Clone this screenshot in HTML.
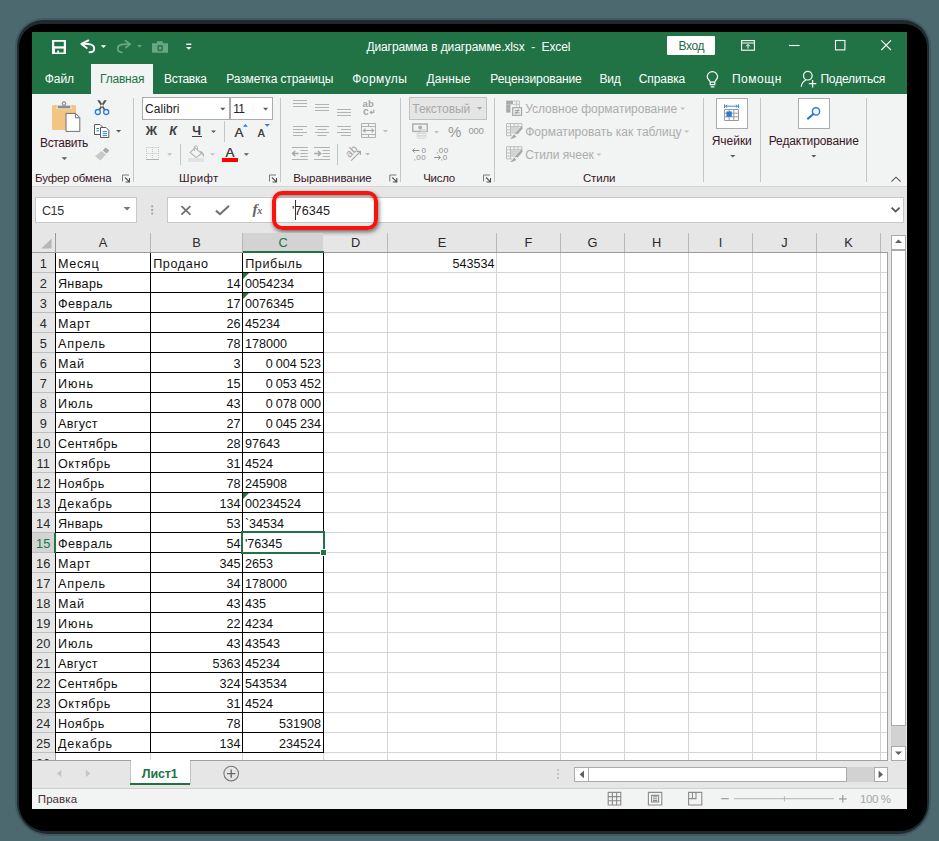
<!DOCTYPE html>
<html><head><meta charset="utf-8"><title>Excel</title>
<style>
*{box-sizing:border-box;margin:0;padding:0}
html,body{width:939px;height:841px;overflow:hidden}
body{background:#4c6970;font-family:"Liberation Sans",sans-serif;position:relative}
.a{position:absolute}
.t{position:absolute;white-space:nowrap}
svg.ov{position:absolute;left:0;top:0;width:939px;height:841px;overflow:visible}
</style></head><body>
<div class="a" style="left:17px;top:20px;width:912px;height:814px;background:rgba(0,0,0,.6);border-radius:26px 26px 31px 31px;box-shadow:0 0 0 2px rgba(0,0,0,.14)"></div>
<div class="a" style="left:19px;top:24px;width:908px;height:807px;background:#000;border-radius:23px 23px 27px 27px"></div>
<div class="a" style="left:32px;top:32px;width:875px;height:777px;background:#f2f3f3;"></div>
<div class="a" style="left:32px;top:32px;width:875px;height:62px;background:#217346;"></div>
<div class="t" style="left:366.40px;top:39px;font-size:12px;line-height:16px;color:#fff;letter-spacing:-0.094px;">Диаграмма в диаграмме.xlsx  -  Excel</div>
<div class="a" style="left:667px;top:36px;width:48px;height:19px;background:#fff;border-radius:1px"></div>
<div class="t" style="left:678.40px;top:38px;font-size:12px;line-height:16px;color:#1e6a3f;letter-spacing:-0.362px;">Вход</div>
<div class="a" style="left:91px;top:64px;width:62px;height:30px;background:#f2f3f3;"></div>
<div class="t" style="left:44.80px;top:71px;font-size:12px;line-height:16px;color:#fff;letter-spacing:-0.101px;">Файл</div>
<div class="t" style="left:100.10px;top:71px;font-size:12px;line-height:16px;color:#217346;letter-spacing:-0.225px;">Главная</div>
<div class="t" style="left:164.00px;top:71px;font-size:12px;line-height:16px;color:#fff;letter-spacing:-0.300px;">Вставка</div>
<div class="t" style="left:226.30px;top:71px;font-size:12px;line-height:16px;color:#fff;letter-spacing:-0.115px;">Разметка страницы</div>
<div class="t" style="left:352.30px;top:71px;font-size:12px;line-height:16px;color:#fff;letter-spacing:0.397px;">Формулы</div>
<div class="t" style="left:426.40px;top:71px;font-size:12px;line-height:16px;color:#fff;letter-spacing:0.141px;">Данные</div>
<div class="t" style="left:490.30px;top:71px;font-size:12px;line-height:16px;color:#fff;letter-spacing:-0.090px;">Рецензирование</div>
<div class="t" style="left:599.60px;top:71px;font-size:12px;line-height:16px;color:#fff;letter-spacing:-0.303px;">Вид</div>
<div class="t" style="left:638.80px;top:71px;font-size:12px;line-height:16px;color:#fff;letter-spacing:-0.096px;">Справка</div>
<div class="t" style="left:731.90px;top:71px;font-size:12px;line-height:16px;color:#fff;letter-spacing:0.546px;">Помощн</div>
<div class="t" style="left:820.40px;top:71px;font-size:12px;line-height:16px;color:#fff;letter-spacing:-0.147px;">Поделиться</div>
<div class="a" style="left:32px;top:186px;width:875px;height:1px;background:#d4d4d4;"></div>
<div class="a" style="left:133px;top:98px;width:1px;height:84px;background:#c6c6c6;"></div>
<div class="a" style="left:280px;top:98px;width:1px;height:84px;background:#c6c6c6;"></div>
<div class="a" style="left:400px;top:98px;width:1px;height:84px;background:#c6c6c6;"></div>
<div class="a" style="left:494px;top:98px;width:1px;height:84px;background:#c6c6c6;"></div>
<div class="a" style="left:703px;top:98px;width:1px;height:84px;background:#c6c6c6;"></div>
<div class="a" style="left:760px;top:98px;width:1px;height:84px;background:#c6c6c6;"></div>
<div class="a" style="left:866px;top:98px;width:1px;height:84px;background:#c6c6c6;"></div>
<div class="t" style="left:40.10px;top:135px;font-size:12px;line-height:16px;color:#3a1626;letter-spacing:-0.371px;">Вставить</div>
<div class="t" style="left:35.00px;top:170px;font-size:11.5px;line-height:16px;color:#3a1626;letter-spacing:-0.129px;">Буфер обмена</div>
<div class="a" style="left:142px;top:97px;width:88px;height:23px;background:#fff;border:1px solid #ababab"></div>
<div class="a" style="left:230px;top:97px;width:43px;height:23px;background:#fff;border:1px solid #ababab"></div>
<div class="t" style="left:145.00px;top:101px;font-size:12px;line-height:16px;color:#222;letter-spacing:0.070px;">Calibri</div>
<div class="t" style="left:233.30px;top:101px;font-size:12px;line-height:16px;color:#222;letter-spacing:-0.779px;">11</div>
<div class="t" style="left:145.70px;top:123px;font-size:12.5px;line-height:16px;color:#403c44;letter-spacing:2.602px;font-weight:bold;">Ж</div>
<div class="t" style="left:169.20px;top:123px;font-size:12.5px;line-height:16px;color:#403c44;letter-spacing:2.315px;font-weight:bold;font-style:italic;">К</div>
<div class="t" style="left:192.20px;top:123px;font-size:12.5px;line-height:16px;color:#403c44;letter-spacing:-0.283px;font-weight:bold;">Ч</div>
<div class="a" style="left:192px;top:136px;width:10px;height:1px;background:#403c44;"></div>
<div class="a" style="left:224px;top:121px;width:1px;height:21px;background:#c6c6c6;"></div>
<div class="t" style="left:234.60px;top:125px;font-size:13.5px;line-height:16px;color:#444;letter-spacing:1.395px;text-shadow:0 0 0.6px #444;">A</div>
<div class="t" style="left:257.80px;top:125px;font-size:10.5px;line-height:16px;color:#444;letter-spacing:0.996px;text-shadow:0 0 0.6px #444;">A</div>
<div class="a" style="left:180px;top:144px;width:1px;height:21px;background:#c6c6c6;"></div>
<div class="a" style="left:188px;top:158px;width:16px;height:4px;background:#e2e2e2;"></div>
<div class="t" style="left:225.60px;top:145px;font-size:13.5px;line-height:16px;color:#444;letter-spacing:0.995px;text-shadow:0 0 0.6px #444;">A</div>
<div class="a" style="left:222px;top:158px;width:16px;height:4px;background:#f00;"></div>
<div class="t" style="left:179.00px;top:170px;font-size:11.5px;line-height:16px;color:#3a1626;letter-spacing:0.373px;">Шрифт</div>
<div class="t" style="left:362.60px;top:96px;font-size:9.5px;line-height:16px;color:#a6a6a6;letter-spacing:0.1px;font-weight:bold;">ab</div>
<div class="t" style="left:363.00px;top:104px;font-size:10px;line-height:16px;color:#a6a6a6;letter-spacing:0px;font-weight:bold;">c</div>
<div class="a" style="left:337px;top:144px;width:1px;height:21px;background:#c6c6c6;"></div>
<div class="t" style="left:344.6px;top:144.2px;font-size:11px;line-height:14px;color:#a2a2a2;transform:rotate(-45deg);transform-origin:50% 50%">ab</div>
<div class="t" style="left:293.20px;top:170px;font-size:11.5px;line-height:16px;color:#3a1626;letter-spacing:-0.055px;">Выравнивание</div>
<div class="a" style="left:409px;top:97px;width:78px;height:23px;background:#e5e5e5;border:1px solid #c0c0c0"></div>
<div class="t" style="left:412.30px;top:101px;font-size:12px;line-height:16px;color:#a9a9a9;letter-spacing:-0.062px;">Текстовый</div>
<div class="t" style="left:447.90px;top:124px;font-size:15px;line-height:16px;color:#979797;letter-spacing:-0.037px;">%</div>
<div class="t" style="left:468.40px;top:123px;font-size:9.5px;line-height:16px;color:#979797;letter-spacing:-0.217px;">000</div>
<div class="t" style="left:421.40px;top:143px;font-size:8px;line-height:16px;color:#8e8e8e;letter-spacing:0px;">0</div>
<div class="t" style="left:413.60px;top:150px;font-size:8px;line-height:16px;color:#8e8e8e;letter-spacing:0.5px;">,00</div>
<div class="t" style="left:436.20px;top:143px;font-size:8px;line-height:16px;color:#8e8e8e;letter-spacing:0.4px;">,00</div>
<div class="t" style="left:440.60px;top:150px;font-size:8px;line-height:16px;color:#8e8e8e;letter-spacing:0px;">,0</div>
<div class="t" style="left:423.20px;top:170px;font-size:11.5px;line-height:16px;color:#3a1626;letter-spacing:-0.295px;">Число</div>
<div class="t" style="left:525.20px;top:101px;font-size:12px;line-height:16px;color:#adadad;letter-spacing:-0.029px;">Условное форматирование</div>
<div class="t" style="left:525.20px;top:124px;font-size:12px;line-height:16px;color:#adadad;letter-spacing:0.011px;">Форматировать как таблицу</div>
<div class="t" style="left:525.20px;top:147px;font-size:12px;line-height:16px;color:#adadad;letter-spacing:-0.068px;">Стили ячеек</div>
<div class="t" style="left:582.90px;top:170px;font-size:11.5px;line-height:16px;color:#3a1626;letter-spacing:-0.166px;">Стили</div>
<div class="a" style="left:716px;top:98px;width:32px;height:31px;background:#fff;border:1px solid #ababab"></div>
<div class="t" style="left:711.70px;top:133px;font-size:12px;line-height:16px;color:#3a1626;letter-spacing:-0.025px;">Ячейки</div>
<div class="a" style="left:798px;top:98px;width:32px;height:31px;background:#fff;border:1px solid #ababab"></div>
<div class="t" style="left:768.70px;top:133px;font-size:12px;line-height:16px;color:#3a1626;letter-spacing:-0.094px;">Редактирование</div>
<div class="a" style="left:32px;top:187px;width:875px;height:573px;background:#e6e6e6;"></div>
<div class="a" style="left:35px;top:197px;width:102px;height:26px;background:#fff;border:1px solid #c8c8c8"></div>
<div class="t" style="left:41.90px;top:203px;font-size:12.5px;line-height:16px;color:#333;letter-spacing:-0.344px;">C15</div>
<div class="a" style="left:167px;top:197px;width:737px;height:26px;background:#fff;border:1px solid #c8c8c8"></div>
<div class="t" style="left:252.4px;top:201px;font-family:'Liberation Serif',serif;font-style:italic;font-size:15.5px;line-height:16px;color:#666;font-weight:bold;letter-spacing:-0.3px">f<span style="font-size:10px">x</span></div>
<div class="t" style="left:292.10px;top:203px;font-size:12.6px;line-height:16px;color:#222;letter-spacing:0.109px;">'76345</div>
<div class="a" style="left:295px;top:200px;width:1px;height:20px;background:#333;"></div>
<div class="a" style="left:272px;top:190.5px;width:106px;height:39px;border:4px solid #f8130c;border-radius:10px;box-shadow:1px 2px 4px rgba(0,0,0,.55),inset 0 2px 2px rgba(0,0,0,.3)"></div>
<div class="a" style="left:56px;top:253px;width:831px;height:507px;background:#fff;"></div>
<div class="a" style="left:243px;top:233px;width:80px;height:18px;background:#d3d3d3;"></div>
<div class="a" style="left:150px;top:233px;width:1px;height:19px;background:#b7b7b7;"></div>
<div class="a" style="left:387px;top:233px;width:1px;height:19px;background:#b7b7b7;"></div>
<div class="a" style="left:496px;top:233px;width:1px;height:19px;background:#b7b7b7;"></div>
<div class="a" style="left:560px;top:233px;width:1px;height:19px;background:#b7b7b7;"></div>
<div class="a" style="left:624px;top:233px;width:1px;height:19px;background:#b7b7b7;"></div>
<div class="a" style="left:688px;top:233px;width:1px;height:19px;background:#b7b7b7;"></div>
<div class="a" style="left:752px;top:233px;width:1px;height:19px;background:#b7b7b7;"></div>
<div class="a" style="left:816px;top:233px;width:1px;height:19px;background:#b7b7b7;"></div>
<div class="a" style="left:880px;top:233px;width:1px;height:19px;background:#b7b7b7;"></div>
<div class="a" style="left:242px;top:233px;width:1px;height:19px;background:#b7b7b7;"></div>
<div class="a" style="left:32px;top:252px;width:855px;height:1px;background:#9b9b9b;"></div>
<div class="a" style="left:55px;top:233px;width:1px;height:527px;background:#9b9b9b;"></div>
<div class="a" style="left:243px;top:251px;width:81px;height:2px;background:#217346;"></div>
<div class="t" style="left:98.73px;top:235px;font-size:12.8px;line-height:16px;color:#2a2a2a;letter-spacing:0px;">A</div>
<div class="t" style="left:192.23px;top:235px;font-size:12.8px;line-height:16px;color:#2a2a2a;letter-spacing:0px;">B</div>
<div class="t" style="left:278.38px;top:235px;font-size:12.8px;line-height:16px;color:#217346;letter-spacing:0px;">C</div>
<div class="t" style="left:350.88px;top:235px;font-size:12.8px;line-height:16px;color:#2a2a2a;letter-spacing:0px;">D</div>
<div class="t" style="left:437.73px;top:235px;font-size:12.8px;line-height:16px;color:#2a2a2a;letter-spacing:0px;">E</div>
<div class="t" style="left:524.59px;top:235px;font-size:12.8px;line-height:16px;color:#2a2a2a;letter-spacing:0px;">F</div>
<div class="t" style="left:587.52px;top:235px;font-size:12.8px;line-height:16px;color:#2a2a2a;letter-spacing:0px;">G</div>
<div class="t" style="left:651.88px;top:235px;font-size:12.8px;line-height:16px;color:#2a2a2a;letter-spacing:0px;">H</div>
<div class="t" style="left:718.72px;top:235px;font-size:12.8px;line-height:16px;color:#2a2a2a;letter-spacing:0px;">I</div>
<div class="t" style="left:781.30px;top:235px;font-size:12.8px;line-height:16px;color:#2a2a2a;letter-spacing:0px;">J</div>
<div class="t" style="left:844.23px;top:235px;font-size:12.8px;line-height:16px;color:#2a2a2a;letter-spacing:0px;">K</div>
<div class="a" style="left:387px;top:253px;width:1px;height:507px;background:#d4d4d4;"></div>
<div class="a" style="left:496px;top:253px;width:1px;height:507px;background:#d4d4d4;"></div>
<div class="a" style="left:560px;top:253px;width:1px;height:507px;background:#d4d4d4;"></div>
<div class="a" style="left:624px;top:253px;width:1px;height:507px;background:#d4d4d4;"></div>
<div class="a" style="left:688px;top:253px;width:1px;height:507px;background:#d4d4d4;"></div>
<div class="a" style="left:752px;top:253px;width:1px;height:507px;background:#d4d4d4;"></div>
<div class="a" style="left:816px;top:253px;width:1px;height:507px;background:#d4d4d4;"></div>
<div class="a" style="left:880px;top:253px;width:1px;height:507px;background:#d4d4d4;"></div>
<div class="a" style="left:324px;top:272px;width:563px;height:1px;background:#d4d4d4;"></div>
<div class="a" style="left:32px;top:272px;width:23px;height:1px;background:#bdbdbd;"></div>
<div class="a" style="left:324px;top:292px;width:563px;height:1px;background:#d4d4d4;"></div>
<div class="a" style="left:32px;top:292px;width:23px;height:1px;background:#bdbdbd;"></div>
<div class="a" style="left:324px;top:312px;width:563px;height:1px;background:#d4d4d4;"></div>
<div class="a" style="left:32px;top:312px;width:23px;height:1px;background:#bdbdbd;"></div>
<div class="a" style="left:324px;top:332px;width:563px;height:1px;background:#d4d4d4;"></div>
<div class="a" style="left:32px;top:332px;width:23px;height:1px;background:#bdbdbd;"></div>
<div class="a" style="left:324px;top:352px;width:563px;height:1px;background:#d4d4d4;"></div>
<div class="a" style="left:32px;top:352px;width:23px;height:1px;background:#bdbdbd;"></div>
<div class="a" style="left:324px;top:372px;width:563px;height:1px;background:#d4d4d4;"></div>
<div class="a" style="left:32px;top:372px;width:23px;height:1px;background:#bdbdbd;"></div>
<div class="a" style="left:324px;top:392px;width:563px;height:1px;background:#d4d4d4;"></div>
<div class="a" style="left:32px;top:392px;width:23px;height:1px;background:#bdbdbd;"></div>
<div class="a" style="left:324px;top:412px;width:563px;height:1px;background:#d4d4d4;"></div>
<div class="a" style="left:32px;top:412px;width:23px;height:1px;background:#bdbdbd;"></div>
<div class="a" style="left:324px;top:432px;width:563px;height:1px;background:#d4d4d4;"></div>
<div class="a" style="left:32px;top:432px;width:23px;height:1px;background:#bdbdbd;"></div>
<div class="a" style="left:324px;top:452px;width:563px;height:1px;background:#d4d4d4;"></div>
<div class="a" style="left:32px;top:452px;width:23px;height:1px;background:#bdbdbd;"></div>
<div class="a" style="left:324px;top:472px;width:563px;height:1px;background:#d4d4d4;"></div>
<div class="a" style="left:32px;top:472px;width:23px;height:1px;background:#bdbdbd;"></div>
<div class="a" style="left:324px;top:492px;width:563px;height:1px;background:#d4d4d4;"></div>
<div class="a" style="left:32px;top:492px;width:23px;height:1px;background:#bdbdbd;"></div>
<div class="a" style="left:324px;top:512px;width:563px;height:1px;background:#d4d4d4;"></div>
<div class="a" style="left:32px;top:512px;width:23px;height:1px;background:#bdbdbd;"></div>
<div class="a" style="left:324px;top:532px;width:563px;height:1px;background:#d4d4d4;"></div>
<div class="a" style="left:32px;top:532px;width:23px;height:1px;background:#bdbdbd;"></div>
<div class="a" style="left:324px;top:552px;width:563px;height:1px;background:#d4d4d4;"></div>
<div class="a" style="left:32px;top:552px;width:23px;height:1px;background:#bdbdbd;"></div>
<div class="a" style="left:324px;top:572px;width:563px;height:1px;background:#d4d4d4;"></div>
<div class="a" style="left:32px;top:572px;width:23px;height:1px;background:#bdbdbd;"></div>
<div class="a" style="left:324px;top:592px;width:563px;height:1px;background:#d4d4d4;"></div>
<div class="a" style="left:32px;top:592px;width:23px;height:1px;background:#bdbdbd;"></div>
<div class="a" style="left:324px;top:612px;width:563px;height:1px;background:#d4d4d4;"></div>
<div class="a" style="left:32px;top:612px;width:23px;height:1px;background:#bdbdbd;"></div>
<div class="a" style="left:324px;top:632px;width:563px;height:1px;background:#d4d4d4;"></div>
<div class="a" style="left:32px;top:632px;width:23px;height:1px;background:#bdbdbd;"></div>
<div class="a" style="left:324px;top:652px;width:563px;height:1px;background:#d4d4d4;"></div>
<div class="a" style="left:32px;top:652px;width:23px;height:1px;background:#bdbdbd;"></div>
<div class="a" style="left:324px;top:672px;width:563px;height:1px;background:#d4d4d4;"></div>
<div class="a" style="left:32px;top:672px;width:23px;height:1px;background:#bdbdbd;"></div>
<div class="a" style="left:324px;top:692px;width:563px;height:1px;background:#d4d4d4;"></div>
<div class="a" style="left:32px;top:692px;width:23px;height:1px;background:#bdbdbd;"></div>
<div class="a" style="left:324px;top:712px;width:563px;height:1px;background:#d4d4d4;"></div>
<div class="a" style="left:32px;top:712px;width:23px;height:1px;background:#bdbdbd;"></div>
<div class="a" style="left:324px;top:732px;width:563px;height:1px;background:#d4d4d4;"></div>
<div class="a" style="left:32px;top:732px;width:23px;height:1px;background:#bdbdbd;"></div>
<div class="a" style="left:324px;top:752px;width:563px;height:1px;background:#d4d4d4;"></div>
<div class="a" style="left:32px;top:752px;width:23px;height:1px;background:#bdbdbd;"></div>
<div class="a" style="left:150px;top:753px;width:1px;height:7px;background:#d4d4d4;"></div>
<div class="a" style="left:242px;top:753px;width:1px;height:7px;background:#d4d4d4;"></div>
<div class="a" style="left:323px;top:753px;width:1px;height:7px;background:#d4d4d4;"></div>
<div class="a" style="left:887px;top:252px;width:1px;height:509px;background:#a0a0a0;"></div>
<div class="a" style="left:32px;top:760px;width:856px;height:1px;background:#a0a0a0;"></div>
<div class="a" style="left:32px;top:533px;width:23px;height:19px;background:#d3d3d3;"></div>
<div class="t" style="left:39.64px;top:256px;font-size:12.8px;line-height:16px;color:#2a2a2a;letter-spacing:0px;">1</div>
<div class="t" style="left:39.64px;top:276px;font-size:12.8px;line-height:16px;color:#2a2a2a;letter-spacing:0px;">2</div>
<div class="t" style="left:39.64px;top:296px;font-size:12.8px;line-height:16px;color:#2a2a2a;letter-spacing:0px;">3</div>
<div class="t" style="left:39.64px;top:316px;font-size:12.8px;line-height:16px;color:#2a2a2a;letter-spacing:0px;">4</div>
<div class="t" style="left:39.64px;top:336px;font-size:12.8px;line-height:16px;color:#2a2a2a;letter-spacing:0px;">5</div>
<div class="t" style="left:39.64px;top:356px;font-size:12.8px;line-height:16px;color:#2a2a2a;letter-spacing:0px;">6</div>
<div class="t" style="left:39.64px;top:376px;font-size:12.8px;line-height:16px;color:#2a2a2a;letter-spacing:0px;">7</div>
<div class="t" style="left:39.64px;top:396px;font-size:12.8px;line-height:16px;color:#2a2a2a;letter-spacing:0px;">8</div>
<div class="t" style="left:39.64px;top:416px;font-size:12.8px;line-height:16px;color:#2a2a2a;letter-spacing:0px;">9</div>
<div class="t" style="left:36.08px;top:436px;font-size:12.8px;line-height:16px;color:#2a2a2a;letter-spacing:0px;">10</div>
<div class="t" style="left:36.56px;top:456px;font-size:12.8px;line-height:16px;color:#2a2a2a;letter-spacing:0px;">11</div>
<div class="t" style="left:36.08px;top:476px;font-size:12.8px;line-height:16px;color:#2a2a2a;letter-spacing:0px;">12</div>
<div class="t" style="left:36.08px;top:496px;font-size:12.8px;line-height:16px;color:#2a2a2a;letter-spacing:0px;">13</div>
<div class="t" style="left:36.08px;top:516px;font-size:12.8px;line-height:16px;color:#2a2a2a;letter-spacing:0px;">14</div>
<div class="t" style="left:36.08px;top:536px;font-size:12.8px;line-height:16px;color:#217346;letter-spacing:0px;">15</div>
<div class="t" style="left:36.08px;top:556px;font-size:12.8px;line-height:16px;color:#2a2a2a;letter-spacing:0px;">16</div>
<div class="t" style="left:36.08px;top:576px;font-size:12.8px;line-height:16px;color:#2a2a2a;letter-spacing:0px;">17</div>
<div class="t" style="left:36.08px;top:596px;font-size:12.8px;line-height:16px;color:#2a2a2a;letter-spacing:0px;">18</div>
<div class="t" style="left:36.08px;top:616px;font-size:12.8px;line-height:16px;color:#2a2a2a;letter-spacing:0px;">19</div>
<div class="t" style="left:36.08px;top:636px;font-size:12.8px;line-height:16px;color:#2a2a2a;letter-spacing:0px;">20</div>
<div class="t" style="left:36.08px;top:656px;font-size:12.8px;line-height:16px;color:#2a2a2a;letter-spacing:0px;">21</div>
<div class="t" style="left:36.08px;top:676px;font-size:12.8px;line-height:16px;color:#2a2a2a;letter-spacing:0px;">22</div>
<div class="t" style="left:36.08px;top:696px;font-size:12.8px;line-height:16px;color:#2a2a2a;letter-spacing:0px;">23</div>
<div class="t" style="left:36.08px;top:716px;font-size:12.8px;line-height:16px;color:#2a2a2a;letter-spacing:0px;">24</div>
<div class="t" style="left:36.08px;top:736px;font-size:12.8px;line-height:16px;color:#2a2a2a;letter-spacing:0px;">25</div>
<div class="a" style="left:32px;top:753px;width:23px;height:7px;overflow:hidden"><div class="t" style="left:4px;top:3px;font-size:12.6px;line-height:16px;color:#2a2a2a">26</div></div>
<div class="t" style="left:57.90px;top:256px;font-size:12.6px;line-height:16px;color:#111;letter-spacing:0.683px;">Месяц</div>
<div class="t" style="left:153.15px;top:256px;font-size:12.6px;line-height:16px;color:#111;letter-spacing:0.647px;">Продано</div>
<div class="t" style="left:245.20px;top:256px;font-size:12.6px;line-height:16px;color:#111;letter-spacing:0.601px;">Прибыль</div>
<div class="t" style="left:57.90px;top:276px;font-size:12.6px;line-height:16px;color:#111;letter-spacing:0.368px;">Январь</div>
<div class="t" style="right:698.60px;top:276px;font-size:12.6px;line-height:16px;color:#111;letter-spacing:0px;text-align:right;">14</div>
<div class="t" style="left:244.90px;top:276px;font-size:12.6px;line-height:16px;color:#111;letter-spacing:0px;">0054234</div>
<div class="t" style="left:57.90px;top:296px;font-size:12.6px;line-height:16px;color:#111;letter-spacing:0.555px;">Февраль</div>
<div class="t" style="right:698.60px;top:296px;font-size:12.6px;line-height:16px;color:#111;letter-spacing:0px;text-align:right;">17</div>
<div class="t" style="left:244.90px;top:296px;font-size:12.6px;line-height:16px;color:#111;letter-spacing:0px;">0076345</div>
<div class="t" style="left:57.90px;top:316px;font-size:12.6px;line-height:16px;color:#111;letter-spacing:0.738px;">Март</div>
<div class="t" style="right:698.60px;top:316px;font-size:12.6px;line-height:16px;color:#111;letter-spacing:0px;text-align:right;">26</div>
<div class="t" style="left:244.90px;top:316px;font-size:12.6px;line-height:16px;color:#111;letter-spacing:0px;">45234</div>
<div class="t" style="left:57.90px;top:336px;font-size:12.6px;line-height:16px;color:#111;letter-spacing:0.893px;">Апрель</div>
<div class="t" style="right:698.60px;top:336px;font-size:12.6px;line-height:16px;color:#111;letter-spacing:0px;text-align:right;">78</div>
<div class="t" style="left:244.90px;top:336px;font-size:12.6px;line-height:16px;color:#111;letter-spacing:0px;">178000</div>
<div class="t" style="left:57.90px;top:356px;font-size:12.6px;line-height:16px;color:#111;letter-spacing:0.705px;">Май</div>
<div class="t" style="right:698.60px;top:356px;font-size:12.6px;line-height:16px;color:#111;letter-spacing:0px;text-align:right;">3</div>
<div class="t" style="right:618.00px;top:356px;font-size:12.6px;line-height:16px;color:#111;letter-spacing:0px;text-align:right;word-spacing:-0.35px;">0 004 523</div>
<div class="t" style="left:57.90px;top:376px;font-size:12.6px;line-height:16px;color:#111;letter-spacing:1.093px;">Июнь</div>
<div class="t" style="right:698.60px;top:376px;font-size:12.6px;line-height:16px;color:#111;letter-spacing:0px;text-align:right;">15</div>
<div class="t" style="right:618.00px;top:376px;font-size:12.6px;line-height:16px;color:#111;letter-spacing:0px;text-align:right;word-spacing:-0.35px;">0 053 452</div>
<div class="t" style="left:57.90px;top:396px;font-size:12.6px;line-height:16px;color:#111;letter-spacing:0.938px;">Июль</div>
<div class="t" style="right:698.60px;top:396px;font-size:12.6px;line-height:16px;color:#111;letter-spacing:0px;text-align:right;">43</div>
<div class="t" style="right:618.00px;top:396px;font-size:12.6px;line-height:16px;color:#111;letter-spacing:0px;text-align:right;word-spacing:-0.35px;">0 078 000</div>
<div class="t" style="left:57.90px;top:416px;font-size:12.6px;line-height:16px;color:#111;letter-spacing:0.363px;">Август</div>
<div class="t" style="right:698.60px;top:416px;font-size:12.6px;line-height:16px;color:#111;letter-spacing:0px;text-align:right;">27</div>
<div class="t" style="right:618.00px;top:416px;font-size:12.6px;line-height:16px;color:#111;letter-spacing:0px;text-align:right;word-spacing:-0.35px;">0 045 234</div>
<div class="t" style="left:57.90px;top:436px;font-size:12.6px;line-height:16px;color:#111;letter-spacing:0.456px;">Сентябрь</div>
<div class="t" style="right:698.60px;top:436px;font-size:12.6px;line-height:16px;color:#111;letter-spacing:0px;text-align:right;">28</div>
<div class="t" style="left:244.90px;top:436px;font-size:12.6px;line-height:16px;color:#111;letter-spacing:0px;">97643</div>
<div class="t" style="left:57.90px;top:456px;font-size:12.6px;line-height:16px;color:#111;letter-spacing:0.609px;">Октябрь</div>
<div class="t" style="right:698.60px;top:456px;font-size:12.6px;line-height:16px;color:#111;letter-spacing:0px;text-align:right;">31</div>
<div class="t" style="left:244.90px;top:456px;font-size:12.6px;line-height:16px;color:#111;letter-spacing:0px;">4524</div>
<div class="t" style="left:57.90px;top:476px;font-size:12.6px;line-height:16px;color:#111;letter-spacing:0.563px;">Ноябрь</div>
<div class="t" style="right:698.60px;top:476px;font-size:12.6px;line-height:16px;color:#111;letter-spacing:0px;text-align:right;">78</div>
<div class="t" style="left:244.90px;top:476px;font-size:12.6px;line-height:16px;color:#111;letter-spacing:0px;">245908</div>
<div class="t" style="left:57.90px;top:496px;font-size:12.6px;line-height:16px;color:#111;letter-spacing:0.853px;">Декабрь</div>
<div class="t" style="right:698.60px;top:496px;font-size:12.6px;line-height:16px;color:#111;letter-spacing:0px;text-align:right;">134</div>
<div class="t" style="left:244.90px;top:496px;font-size:12.6px;line-height:16px;color:#111;letter-spacing:0px;">00234524</div>
<div class="t" style="left:57.90px;top:516px;font-size:12.6px;line-height:16px;color:#111;letter-spacing:0.368px;">Январь</div>
<div class="t" style="right:698.60px;top:516px;font-size:12.6px;line-height:16px;color:#111;letter-spacing:0px;text-align:right;">53</div>
<div class="t" style="left:244.90px;top:516px;font-size:12.6px;line-height:16px;color:#111;letter-spacing:0px;">`34534</div>
<div class="t" style="left:57.90px;top:536px;font-size:12.6px;line-height:16px;color:#111;letter-spacing:0.555px;">Февраль</div>
<div class="t" style="right:698.60px;top:536px;font-size:12.6px;line-height:16px;color:#111;letter-spacing:0px;text-align:right;">54</div>
<div class="t" style="left:244.90px;top:536px;font-size:12.6px;line-height:16px;color:#111;letter-spacing:0px;">'76345</div>
<div class="t" style="left:57.90px;top:556px;font-size:12.6px;line-height:16px;color:#111;letter-spacing:0.738px;">Март</div>
<div class="t" style="right:698.60px;top:556px;font-size:12.6px;line-height:16px;color:#111;letter-spacing:0px;text-align:right;">345</div>
<div class="t" style="left:244.90px;top:556px;font-size:12.6px;line-height:16px;color:#111;letter-spacing:0px;">2653</div>
<div class="t" style="left:57.90px;top:576px;font-size:12.6px;line-height:16px;color:#111;letter-spacing:0.893px;">Апрель</div>
<div class="t" style="right:698.60px;top:576px;font-size:12.6px;line-height:16px;color:#111;letter-spacing:0px;text-align:right;">34</div>
<div class="t" style="left:244.90px;top:576px;font-size:12.6px;line-height:16px;color:#111;letter-spacing:0px;">178000</div>
<div class="t" style="left:57.90px;top:596px;font-size:12.6px;line-height:16px;color:#111;letter-spacing:0.705px;">Май</div>
<div class="t" style="right:698.60px;top:596px;font-size:12.6px;line-height:16px;color:#111;letter-spacing:0px;text-align:right;">43</div>
<div class="t" style="left:244.90px;top:596px;font-size:12.6px;line-height:16px;color:#111;letter-spacing:0px;">435</div>
<div class="t" style="left:57.90px;top:616px;font-size:12.6px;line-height:16px;color:#111;letter-spacing:1.093px;">Июнь</div>
<div class="t" style="right:698.60px;top:616px;font-size:12.6px;line-height:16px;color:#111;letter-spacing:0px;text-align:right;">22</div>
<div class="t" style="left:244.90px;top:616px;font-size:12.6px;line-height:16px;color:#111;letter-spacing:0px;">4234</div>
<div class="t" style="left:57.90px;top:636px;font-size:12.6px;line-height:16px;color:#111;letter-spacing:0.938px;">Июль</div>
<div class="t" style="right:698.60px;top:636px;font-size:12.6px;line-height:16px;color:#111;letter-spacing:0px;text-align:right;">43</div>
<div class="t" style="left:244.90px;top:636px;font-size:12.6px;line-height:16px;color:#111;letter-spacing:0px;">43543</div>
<div class="t" style="left:57.90px;top:656px;font-size:12.6px;line-height:16px;color:#111;letter-spacing:0.363px;">Август</div>
<div class="t" style="right:698.60px;top:656px;font-size:12.6px;line-height:16px;color:#111;letter-spacing:0px;text-align:right;">5363</div>
<div class="t" style="left:244.90px;top:656px;font-size:12.6px;line-height:16px;color:#111;letter-spacing:0px;">45234</div>
<div class="t" style="left:57.90px;top:676px;font-size:12.6px;line-height:16px;color:#111;letter-spacing:0.456px;">Сентябрь</div>
<div class="t" style="right:698.60px;top:676px;font-size:12.6px;line-height:16px;color:#111;letter-spacing:0px;text-align:right;">324</div>
<div class="t" style="left:244.90px;top:676px;font-size:12.6px;line-height:16px;color:#111;letter-spacing:0px;">543534</div>
<div class="t" style="left:57.90px;top:696px;font-size:12.6px;line-height:16px;color:#111;letter-spacing:0.609px;">Октябрь</div>
<div class="t" style="right:698.60px;top:696px;font-size:12.6px;line-height:16px;color:#111;letter-spacing:0px;text-align:right;">31</div>
<div class="t" style="left:244.90px;top:696px;font-size:12.6px;line-height:16px;color:#111;letter-spacing:0px;">4524</div>
<div class="t" style="left:57.90px;top:716px;font-size:12.6px;line-height:16px;color:#111;letter-spacing:0.563px;">Ноябрь</div>
<div class="t" style="right:698.60px;top:716px;font-size:12.6px;line-height:16px;color:#111;letter-spacing:0px;text-align:right;">78</div>
<div class="t" style="right:618.00px;top:716px;font-size:12.6px;line-height:16px;color:#111;letter-spacing:0px;text-align:right;word-spacing:-0.35px;">531908</div>
<div class="t" style="left:57.90px;top:736px;font-size:12.6px;line-height:16px;color:#111;letter-spacing:0.853px;">Декабрь</div>
<div class="t" style="right:698.60px;top:736px;font-size:12.6px;line-height:16px;color:#111;letter-spacing:0px;text-align:right;">134</div>
<div class="t" style="right:618.00px;top:736px;font-size:12.6px;line-height:16px;color:#111;letter-spacing:0px;text-align:right;word-spacing:-0.35px;">234524</div>
<div class="t" style="right:444.60px;top:256px;font-size:12.6px;line-height:16px;color:#111;letter-spacing:0px;text-align:right;">543534</div>
<div class="a" style="left:55px;top:253px;width:1px;height:500px;background:#000;"></div>
<div class="a" style="left:150px;top:253px;width:1px;height:500px;background:#000;"></div>
<div class="a" style="left:242px;top:253px;width:1px;height:500px;background:#000;"></div>
<div class="a" style="left:323px;top:253px;width:1px;height:500px;background:#000;"></div>
<div class="a" style="left:55px;top:272px;width:269px;height:1px;background:#000;"></div>
<div class="a" style="left:55px;top:292px;width:269px;height:1px;background:#000;"></div>
<div class="a" style="left:55px;top:312px;width:269px;height:1px;background:#000;"></div>
<div class="a" style="left:55px;top:332px;width:269px;height:1px;background:#000;"></div>
<div class="a" style="left:55px;top:352px;width:269px;height:1px;background:#000;"></div>
<div class="a" style="left:55px;top:372px;width:269px;height:1px;background:#000;"></div>
<div class="a" style="left:55px;top:392px;width:269px;height:1px;background:#000;"></div>
<div class="a" style="left:55px;top:412px;width:269px;height:1px;background:#000;"></div>
<div class="a" style="left:55px;top:432px;width:269px;height:1px;background:#000;"></div>
<div class="a" style="left:55px;top:452px;width:269px;height:1px;background:#000;"></div>
<div class="a" style="left:55px;top:472px;width:269px;height:1px;background:#000;"></div>
<div class="a" style="left:55px;top:492px;width:269px;height:1px;background:#000;"></div>
<div class="a" style="left:55px;top:512px;width:269px;height:1px;background:#000;"></div>
<div class="a" style="left:55px;top:532px;width:269px;height:1px;background:#000;"></div>
<div class="a" style="left:55px;top:552px;width:269px;height:1px;background:#000;"></div>
<div class="a" style="left:55px;top:572px;width:269px;height:1px;background:#000;"></div>
<div class="a" style="left:55px;top:592px;width:269px;height:1px;background:#000;"></div>
<div class="a" style="left:55px;top:612px;width:269px;height:1px;background:#000;"></div>
<div class="a" style="left:55px;top:632px;width:269px;height:1px;background:#000;"></div>
<div class="a" style="left:55px;top:652px;width:269px;height:1px;background:#000;"></div>
<div class="a" style="left:55px;top:672px;width:269px;height:1px;background:#000;"></div>
<div class="a" style="left:55px;top:692px;width:269px;height:1px;background:#000;"></div>
<div class="a" style="left:55px;top:712px;width:269px;height:1px;background:#000;"></div>
<div class="a" style="left:55px;top:732px;width:269px;height:1px;background:#000;"></div>
<div class="a" style="left:55px;top:752px;width:269px;height:1px;background:#000;"></div>
<div class="a" style="left:54px;top:533px;width:2px;height:20px;background:#217346;"></div>
<div class="a" style="left:241px;top:531px;width:84px;height:23px;border:2px solid #217346"></div>
<div class="a" style="left:320px;top:549px;width:7px;height:7px;background:#fff;"></div>
<div class="a" style="left:321px;top:550px;width:5px;height:5px;background:#217346;"></div>
<div class="a" style="left:891px;top:235px;width:15px;height:15px;background:#fff;border:1px solid #ababab"></div>
<div class="a" style="left:891px;top:250px;width:15px;height:476px;background:#fff;border:1px solid #ababab"></div>
<div class="a" style="left:891px;top:726px;width:15px;height:20px;background:#d2d2d2;"></div>
<div class="a" style="left:891px;top:746px;width:15px;height:15px;background:#fff;border:1px solid #ababab"></div>
<div class="a" style="left:32px;top:761px;width:875px;height:28px;background:#e6e6e6;"></div>
<div class="a" style="left:32px;top:788px;width:875px;height:1px;background:#cfcfcf;"></div>
<div class="a" style="left:131px;top:760px;width:59px;height:24px;background:#fff;"></div>
<div class="a" style="left:130px;top:761px;width:1px;height:23px;background:#c4c4c4;"></div>
<div class="a" style="left:190px;top:761px;width:1px;height:23px;background:#c4c4c4;"></div>
<div class="a" style="left:130px;top:783px;width:60px;height:2px;background:#217346;"></div>
<div class="t" style="left:141.80px;top:766px;font-size:12.5px;line-height:16px;color:#217346;letter-spacing:-0.136px;font-weight:bold;">Лист1</div>
<div class="a" style="left:574px;top:767px;width:15px;height:15px;background:#fff;border:1px solid #ababab"></div>
<div class="a" style="left:588px;top:767px;width:259px;height:15px;background:#fff;border:1px solid #ababab"></div>
<div class="a" style="left:847px;top:767px;width:27px;height:15px;background:#d2d2d2;"></div>
<div class="a" style="left:874px;top:767px;width:14px;height:15px;background:#fff;border:1px solid #ababab"></div>
<div class="a" style="left:32px;top:789px;width:875px;height:20px;background:#f2f3f3;"></div>
<div class="t" style="left:37.80px;top:791px;font-size:11.5px;line-height:16px;color:#45303a;letter-spacing:0.076px;">Правка</div>
<div class="t" style="left:860.00px;top:791px;font-size:11.5px;line-height:16px;color:#a6a6a6;letter-spacing:-0.422px;">100 %</div>
<svg class="ov" width="939" height="841" viewBox="0 0 939 841">
<rect x="52" y="40" width="14" height="14" fill="#fff"/><rect x="54.2" y="41.8" width="9.6" height="4.5" fill="#217346"/><rect x="55" y="48.6" width="8.6" height="3.9" fill="#217346"/><rect x="57.2" y="50.6" width="1.9" height="2" fill="#fff"/>
<path d="M88.4,40.4 L81.4,43.9 L86.8,47.9 M82,43.9 C88,43.6 94.2,43.8 94.2,48.4 C94.2,51 92,52.2 89.6,52.3" fill="none" stroke="#fff" stroke-width="1.9" stroke-linecap="round" stroke-linejoin="round"/>
<path d="M100.8,45.2 H106.2 L103.5,47.900000000000006 Z" fill="#fff"/>
<path d="M125.4,40.6 L130.2,44.1 L125.8,47.6 M129.6,44.1 C123,43.8 117.6,44.4 117.6,48.6 C117.6,51 119.6,52.2 122,52.4" fill="none" stroke="#69a685" stroke-width="1.7" stroke-linecap="round" stroke-linejoin="round"/>
<path d="M137.1,45 H142.1 L139.6,47.5 Z" fill="#69a685"/>
<path d="M152,43.2 H157 V41.3 H162.8 V43.2 H168 V52.8 H152 Z" fill="#69a685"/><rect x="157.4" y="45" width="5.6" height="6.2" rx="1.4" fill="#2f7b53"/><rect x="159" y="46.8" width="2.4" height="2.6" fill="#69a685"/>
<path d="M186.2,44.3 H191.4" stroke="#fff" stroke-width="1.4"/>
<path d="M186,47 H191.6 L188.8,49.8 Z" fill="#fff"/>
<rect x="741.6" y="40.6" width="12.8" height="9.6" fill="none" stroke="#fff" stroke-width="1.1"/><path d="M741.6,43 H754.4 M748,48.6 V44.6 M746,46.4 L748,44.4 L750,46.4" fill="none" stroke="#fff" stroke-width="1"/>
<path d="M789,45.5 H799.6" stroke="#fff" stroke-width="1.1"/>
<rect x="835.5" y="40.5" width="9.4" height="9.4" fill="none" stroke="#fff" stroke-width="1.1"/>
<path d="M881.3,40.4 L891,50 M891,40.4 L881.3,50" stroke="#fff" stroke-width="1.1"/>
<path d="M710.2,82.2 C710.2,80.2 707.2,79.6 707.2,76.8 A5.2,5.2 0 0 1 717.6,76.8 C717.6,79.6 714.8,80.2 714.8,82.2 V84.6 H710.2 Z M710.2,82.2 H714.8 M710.8,86.8 H714.4" fill="none" stroke="#fff" stroke-width="1.2"/>
<circle cx="807.8" cy="75.7" r="4.3" fill="none" stroke="#fff" stroke-width="1.2"/><path d="M801.2,86.8 C801.6,83.4 803.4,81.2 805.8,80.2" fill="none" stroke="#fff" stroke-width="1.2"/><path d="M812.6,80 V87.4 M808.9,83.7 H816.3" stroke="#fff" stroke-width="1.3"/>
<rect x="52" y="105" width="24" height="25" rx="1.5" fill="#f3c583"/>
<rect x="56.6" y="104.4" width="14.8" height="4.8" fill="#f3f3f3"/><rect x="57.6" y="105.6" width="12.8" height="2.8" fill="#8e8e8e"/><circle cx="64" cy="103.6" r="1.7" fill="#f3f3f3" stroke="#8e8e8e" stroke-width="1.2"/>
<path d="M66,113.4 H75.6 L79.8,117.6 V131.4 H66 Z" fill="#fff" stroke="#6e6e6e" stroke-width="1"/><path d="M75.4,113.6 V117.8 H79.6" fill="none" stroke="#6e6e6e" stroke-width="1"/>
<path d="M61.6,157.2 H67.2 L64.4,160.0 Z" fill="#5a5a5a"/>
<path d="M97.2,100.2 L99.8,100.2 L105.4,109.4 L104,110.2 Z M106.8,100.2 L104.2,100.2 L98.6,109.4 L100,110.2 Z" fill="#555"/>
<circle cx="97.8" cy="112" r="2.5" fill="none" stroke="#2b7cd3" stroke-width="1.3"/><circle cx="106.2" cy="112" r="2.5" fill="none" stroke="#2b7cd3" stroke-width="1.3"/>
<path d="M94.5,124.5 H100 L102.5,127 V134.5 H94.5 Z" fill="#fff" stroke="#5a5a5a" stroke-width="1"/><path d="M100.5,127.5 H106 L108.8,130.3 V137.5 H100.5 Z" fill="#fff" stroke="#5a5a5a" stroke-width="1"/><path d="M96.4,128.5 H99 M96.4,130.8 H99 M102.6,131.6 H107 M102.6,133.6 H107 M102.6,135.6 H107" stroke="#2b7cd3" stroke-width="1"/>
<path d="M116,130 H121.2 L118.6,132.6 Z" fill="#5a5a5a"/>
<path d="M105.6,147.4 L109.4,150.6 L106.6,153.6 L102.8,150.4 Z" fill="#a9a9a9"/><path d="M101.6,151 L106,154.6 L100.4,160.4 L95,156.2 Z" fill="#c9c9c9"/>
<path d="M129,175.0 H122.5 V181.5" fill="none" stroke="#7a7a7a" stroke-width="1"/><path d="M125,177.5 L129.2,181.7 M129.5,178.1 V182.0 H125.6" fill="none" stroke="#505050" stroke-width="1.1"/>
<path d="M220.2,107.8 H225.4 L222.8,110.4 Z" fill="#5a5a5a"/>
<path d="M263,107.8 H268.2 L265.6,110.39999999999999 Z" fill="#5a5a5a"/>
<path d="M211,130.6 H216 L213.5,133.1 Z" fill="#5a5a5a"/>
<path d="M243,126.8 L245.4,124 L247.8,126.8 Z" fill="#2b7cd3"/>
<path d="M264.6,124 H269.8 L267.2,126.8 Z" fill="#2b7cd3"/>
<path d="M146.5,147 V159.5 M152.5,147 V159.5 M158.5,147 V159.5 M146.5,147.5 H158.5 M146.5,153.5 H158.5" fill="none" stroke="#c4c4c4" stroke-width="1" stroke-dasharray="1,1"/><path d="M146,159.5 H159" stroke="#b0b0b0" stroke-width="1"/>
<path d="M167.1,153.2 H172.1 L169.6,155.7 Z" fill="#c0c0c0"/>
<path d="M195,147.8 L201.4,153.4 L196.2,157.6 L190.2,152.4 Z" fill="none" stroke="#b4b4b4" stroke-width="1.1"/><path d="M194.4,151 V147.4 A1.5,1.5 0 0 1 197.4,147.4 V149.8" fill="none" stroke="#b4b4b4" stroke-width="1"/><path d="M199.6,150.6 C203,151.6 204.6,154.4 203.8,157.2 C202.6,155.6 201.6,153.6 199.6,150.6 Z" fill="#b0b0b0"/>
<path d="M210,153.2 H215 L212.5,155.7 Z" fill="#c0c0c0"/>
<path d="M243.8,153.2 H249 L246.4,155.79999999999998 Z" fill="#5a5a5a"/>
<path d="M276,175.0 H269.5 V181.5" fill="none" stroke="#7a7a7a" stroke-width="1"/><path d="M272,177.5 L276.2,181.7 M276.5,178.1 V182.0 H272.6" fill="none" stroke="#505050" stroke-width="1.1"/>
<path d="M293,100.5 H307 M293,103.5 H307 M293,106.5 H307 " stroke="#b2b2b2" stroke-width="1"/>
<path d="M315,104.5 H329 M315,107.5 H329 M315,110.5 H329 " stroke="#b2b2b2" stroke-width="1"/>
<path d="M337,109.5 H351 M337,112.5 H351 M337,115.5 H351 " stroke="#b2b2b2" stroke-width="1"/>
<path d="M293,126.5 H307 M293,129.5 H303 M293,132.5 H307 M293,135.5 H303 " stroke="#b2b2b2" stroke-width="1"/>
<path d="M315,126.5 H329 M317.5,129.5 H326.5 M315,132.5 H329 M317.5,135.5 H326.5 " stroke="#b2b2b2" stroke-width="1"/>
<path d="M337,126.5 H351 M341,129.5 H351 M337,132.5 H351 M341,135.5 H351 " stroke="#b2b2b2" stroke-width="1"/>
<path d="M373.8,109.6 V112.4 H370.4 M371.8,110.9 L370.2,112.4 L371.8,113.9" fill="none" stroke="#a6a6a6" stroke-width="1.1"/>
<path d="M361.5,123.5 H375.5 V137.5 H361.5 Z M361.5,126.5 H375.5 M361.5,134.5 H375.5 M368.5,123.5 V126.5 M368.5,134.5 V137.5" fill="none" stroke="#b2b2b2" stroke-width="1"/><path d="M363.4,130.5 H373.6 M365.4,128.7 L363.4,130.5 L365.4,132.3 M371.6,128.7 L373.6,130.5 L371.6,132.3" fill="none" stroke="#a6a6a6" stroke-width="1.1"/>
<path d="M382.8,130 H388 L385.4,132.6 Z" fill="#bcbcbc"/>
<path d="M292,147.5 H307.8 M300.4,150.5 H307.8 M300.4,153.5 H307.8 M300.4,156.5 H307.8 M292,159.5 H307.8" stroke="#b2b2b2" stroke-width="1"/><path d="M292.6,153.5 H298.6 M295.2,151 L292.6,153.5 L295.2,156" fill="none" stroke="#a6a6a6" stroke-width="1.6"/>
<path d="M314,147.5 H330 M322.6,150.5 H330 M322.6,153.5 H330 M322.6,156.5 H330 M314,159.5 H330" stroke="#b2b2b2" stroke-width="1"/><path d="M314.2,153.5 H320.4 M318,151 L320.6,153.5 L318,156" fill="none" stroke="#a6a6a6" stroke-width="1.6"/>
<path d="M351.2,160.6 L360.2,151.6 M357,151.4 H360.4 V154.8" fill="none" stroke="#a6a6a6" stroke-width="1.2"/>
<path d="M365,153 H370.2 L367.6,155.6 Z" fill="#bcbcbc"/>
<path d="M396.3,175.0 H389.8 V181.5" fill="none" stroke="#7a7a7a" stroke-width="1"/><path d="M392.3,177.5 L396.5,181.7 M396.8,178.1 V182.0 H392.90000000000003" fill="none" stroke="#505050" stroke-width="1.1"/>
<path d="M476.8,107 H482.4 L479.6,109.79999999999998 Z" fill="#a8a8a8"/>
<rect x="412.8" y="124" width="14.4" height="7.4" fill="none" stroke="#b0b0b0" stroke-width="1.5"/><circle cx="420.2" cy="127.6" r="2.1" fill="#b0b0b0"/><ellipse cx="423.6" cy="130.2" rx="3.6" ry="1.3" fill="#dcdcdc"/><ellipse cx="421.6" cy="134.6" rx="5" ry="1.4" fill="none" stroke="#cfcfcf" stroke-width="1"/><ellipse cx="421.6" cy="137" rx="5" ry="1.4" fill="none" stroke="#d6d6d6" stroke-width="1"/>
<path d="M434,131 H439 L436.5,133.5 Z" fill="#c0c0c0"/>
<path d="M412.6,150.5 H419.4 M414.8,148.3 L412.6,150.5 L414.8,152.7" fill="none" stroke="#8e8e8e" stroke-width="1"/>
<path d="M434.2,157.5 H440.4 M438.2,155.3 L440.4,157.5 L438.2,159.7" fill="none" stroke="#8e8e8e" stroke-width="1"/>
<path d="M490,175.0 H483.5 V181.5" fill="none" stroke="#7a7a7a" stroke-width="1"/><path d="M486,177.5 L490.2,181.7 M490.5,178.1 V182.0 H486.6" fill="none" stroke="#505050" stroke-width="1.1"/>
<rect x="506.2" y="100.6" width="6.7" height="3.8" fill="#a9a9a9"/><rect x="506.2" y="104.4" width="4.2" height="8.2" fill="#a9a9a9"/><path d="M506.2,104.6 H510.4 M506.2,108.4 H510.4" stroke="#bcbcbc" stroke-width="0.8"/><path d="M512.9,101 H519.5 V107 M516.4,101 V106.4 M512.9,104.3 H519.5" fill="none" stroke="#c4c4c4" stroke-width="1"/><rect x="512.7" y="107.7" width="8.8" height="7.6" fill="#f3f3f3" stroke="#a6a6a6" stroke-width="1.2"/><path d="M514.6,110.6 H519.6 M514.6,112.8 H519.6 M518.4,109.4 L515.8,114" stroke="#909090" stroke-width="0.9" fill="none"/>
<path d="M506.5,123.5 H521.8 V126 M506.5,123.5 V135.7 H512.2 M506.5,126.6 H521.2 M506.5,129.8 H517.2 M506.5,132.8 H514.2 M510.5,123.5 V135.7 M514.2,123.5 V133 M518.0,123.5 V129" fill="none" stroke="#bdbdbd" stroke-width="1"/>
<path d="M511.0,127 H517.6 V129.6 L514.2,133.6 H511.0 Z" fill="#d4d4d4"/>
<path d="M522.2,125.4 L522.6,128.6 L516.8,135.6 L514.6,133.6 Z" fill="#a9a9a9"/><path d="M514.4,134.2 L516.6,136.2 C514.8,138.2 512.2,138.8 510.0,138.8 C512.0,137.4 512.6,135.8 514.4,134.2 Z" fill="#a9a9a9"/><circle cx="516.4" cy="135" r="1.3" fill="#f3f3f3"/>
<path d="M506.5,146.7 H521.8 V149.2 M506.5,146.7 V158.89999999999998 H512.2 M506.5,149.79999999999998 H521.2 M506.5,153.0 H517.2 M506.5,156.0 H514.2 M510.5,146.7 V158.89999999999998 M514.2,146.7 V156.2 M518.0,146.7 V152.2" fill="none" stroke="#bdbdbd" stroke-width="1"/>
<path d="M511.0,150.2 H517.6 V152.79999999999998 L514.2,156.79999999999998 H511.0 Z" fill="#d4d4d4"/>
<path d="M522.2,148.6 L522.6,151.79999999999998 L516.8,158.79999999999998 L514.6,156.79999999999998 Z" fill="#a9a9a9"/><path d="M514.4,157.39999999999998 L516.6,159.39999999999998 C514.8,161.39999999999998 512.2,162.0 510.0,162.0 C512.0,160.6 512.6,159.0 514.4,157.39999999999998 Z" fill="#a9a9a9"/><circle cx="516.4" cy="158.2" r="1.3" fill="#f3f3f3"/>
<path d="M680.2,107.6 H685.2 L682.7,110.1 Z" fill="#c0c0c0"/>
<path d="M684.2,130.6 H689.2 L686.7,133.1 Z" fill="#c0c0c0"/>
<path d="M596.4,153.6 H601.4 L598.9,156.1 Z" fill="#c0c0c0"/>
<path d="M724.5,109.5 H738.5 V120.5 H724.5 Z M724.5,113.2 H738.5 M724.5,116.8 H738.5 M729.2,109.5 V120.5 M733.8,109.5 V120.5" fill="none" stroke="#9a9a9a" stroke-width="1"/><rect x="726.4" y="111.4" width="5.4" height="5.4" fill="#2b7cd3"/><path d="M724.5,104.4 V108 M738.5,104.4 V108 M725.4,106.2 H737.6 M727.2,104.8 L725.6,106.2 L727.2,107.6 M735.8,104.8 L737.4,106.2 L735.8,107.6" fill="none" stroke="#2b7cd3" stroke-width="0.9"/>
<path d="M730.2,155 H735.4 L732.8,157.59999999999997 Z" fill="#5a5a5a"/>
<circle cx="816" cy="111.4" r="3.6" fill="none" stroke="#2b7cd3" stroke-width="1.5"/><path d="M813.4,114 L808,118.6" stroke="#2b7cd3" stroke-width="2.2" stroke-linecap="round"/>
<path d="M811.2,155 H816.4 L813.8,157.59999999999997 Z" fill="#5a5a5a"/>
<path d="M891.4,181.6 L896,177.2 L900.6,181.6" fill="none" stroke="#555" stroke-width="1.1"/>
<path d="M123.6,207 H130.4 L127.0,210.4 Z" fill="#777"/>
<rect x="151.2" y="205.4" width="1.9" height="1.9" fill="#a2a2a2"/>
<rect x="151.2" y="209" width="1.9" height="1.9" fill="#a2a2a2"/>
<rect x="151.2" y="212.6" width="1.9" height="1.9" fill="#a2a2a2"/>
<path d="M181.4,206.2 L190.4,214.6 M190.4,206.2 L181.4,214.6" stroke="#707070" stroke-width="1.8"/>
<path d="M216,210.6 L220,214.2 L229,205.8" fill="none" stroke="#707070" stroke-width="2.1"/>
<path d="M891.6,207.6 L895.6,211.6 L899.6,207.6" fill="none" stroke="#555" stroke-width="1.8"/>
<path d="M51.6,238.4 V248.4 H41.2 Z" fill="#b7b7b7"/>
<path d="M243,273 H249 L243,279 Z" fill="#217346"/>
<path d="M243,293 H249 L243,299 Z" fill="#217346"/>
<path d="M243,493 H249 L243,499 Z" fill="#217346"/>
<path d="M895,243 L898.5,239.6 L902,243 Z" fill="#606060"/>
<path d="M895,751.6 H902 L898.5,755 Z" fill="#606060"/>
<path d="M61.4,769.8 V777.2 L56.8,773.5 Z" fill="#c6c6c6"/><path d="M85.8,769.8 V777.2 L90.4,773.5 Z" fill="#c6c6c6"/>
<circle cx="231.2" cy="773.6" r="7.3" fill="none" stroke="#7a7a7a" stroke-width="1.1"/><path d="M227,773.6 H235.4 M231.2,769.4 V777.8" stroke="#6a6a6a" stroke-width="1.4"/>
<rect x="557.2" y="769.4" width="1.6" height="1.6" fill="#b0b0b0"/>
<rect x="557.2" y="773.2" width="1.6" height="1.6" fill="#b0b0b0"/>
<rect x="557.2" y="777" width="1.6" height="1.6" fill="#b0b0b0"/>
<path d="M584,770.6 V778.2 L579.6,774.4 Z" fill="#606060"/>
<path d="M878.6,770.6 V778.2 L883,774.4 Z" fill="#606060"/>
<path d="M608.2,792.4 H620.8 V805 H608.2 Z M612.4,792.4 V805 M616.6,792.4 V805 M608.2,796.6 H620.8 M608.2,800.8 H620.8" fill="none" stroke="#8c8c8c" stroke-width="1.1"/>
<path d="M648.4,792.4 H661.8 V805 H648.4 Z M651.6,795.4 H658.6 V802 H651.6 Z M653,796.8 H657.2 M653,798.7 H657.2 M653,800.6 H657.2" fill="none" stroke="#8c8c8c" stroke-width="1.1"/>
<path d="M688.6,792.4 H701.8 V805 H688.6 Z M692.4,792.4 V798.6 H688.6 M696,792.4 V798.6 H692.4" fill="none" stroke="#8c8c8c" stroke-width="1.1"/>
<path d="M721.2,798.7 H728.8" stroke="#9a9a9a" stroke-width="1.2"/><path d="M734,798.7 H833.8 M784.4,796.2 V801.4" stroke="#b4b4b4" stroke-width="1"/><path d="M839,798.8 H846.6 M842.8,795 V802.6" stroke="#9a9a9a" stroke-width="1.2"/>
</svg>
</body></html>
